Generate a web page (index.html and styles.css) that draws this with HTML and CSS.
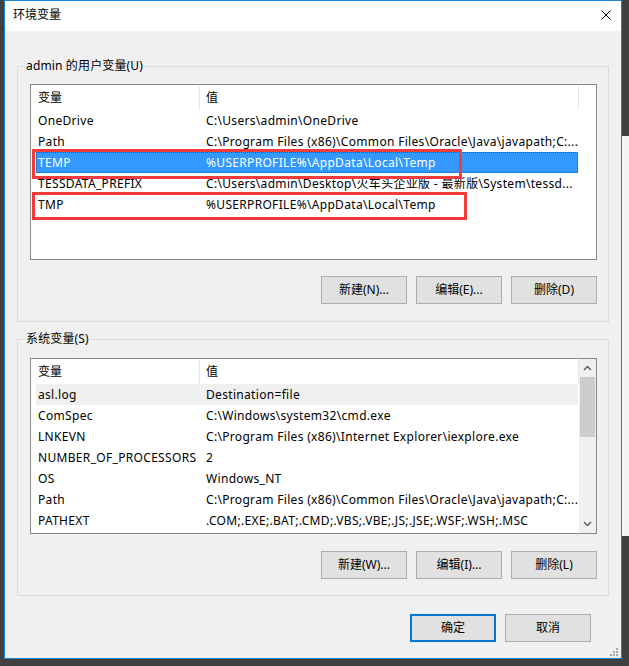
FILE: index.html
```html
<!DOCTYPE html>
<html lang="zh-CN">
<head>
<meta charset="utf-8">
<title>环境变量</title>
<link rel="stylesheet" href="styles.css">
</head>
<body>
<div class="backwin"></div>
<div class="window">
  <div class="titlebar">
    <span class="title">环境变量</span>
    <svg class="close" width="10" height="10" viewBox="0 0 10 10"><path d="M0.5 0.5L9.5 9.5M9.5 0.5L0.5 9.5" stroke="#000" stroke-width="1" fill="none"/></svg>
  </div>
  <div class="content">
    <div class="group group-user">
      <div class="legend">admin 的用户变量(U)</div>
      <div class="list">
        <div class="list-main">
          <div class="header">
            <div class="hcell hname">变量</div>
            <div class="hcell hvalue">值</div>
          </div>
          <div class="row"><span class="cname">OneDrive</span><span class="cvalue">C:\Users\admin\OneDrive</span></div>
          <div class="row"><span class="cname">Path</span><span class="cvalue">C:\Program Files (x86)\Common Files\Oracle\Java\javapath;C:...</span></div>
          <div class="row selected"><span class="cname">TEMP</span><span class="cvalue">%USERPROFILE%\AppData\Local\Temp</span></div>
          <div class="row"><span class="cname">TESSDATA_PREFIX</span><span class="cvalue">C:\Users\admin\Desktop\火车头企业版 - 最新版\System\tessd...</span></div>
          <div class="row"><span class="cname">TMP</span><span class="cvalue">%USERPROFILE%\AppData\Local\Temp</span></div>
        </div>
        <div class="mark mark-temp"></div>
        <div class="mark mark-tmp"></div>
      </div>
      <div class="buttons">
        <button class="btn">新建(N)...</button>
        <button class="btn">编辑(E)...</button>
        <button class="btn">删除(D)</button>
      </div>
    </div>

    <div class="group group-sys">
      <div class="legend">系统变量(S)</div>
      <div class="list">
        <div class="list-main narrow">
          <div class="header">
            <div class="hcell hname">变量</div>
            <div class="hcell hvalue">值</div>
          </div>
          <div class="row hover"><span class="cname">asl.log</span><span class="cvalue">Destination=file</span></div>
          <div class="row"><span class="cname">ComSpec</span><span class="cvalue">C:\Windows\system32\cmd.exe</span></div>
          <div class="row"><span class="cname">LNKEVN</span><span class="cvalue">C:\Program Files (x86)\Internet Explorer\iexplore.exe</span></div>
          <div class="row"><span class="cname">NUMBER_OF_PROCESSORS</span><span class="cvalue">2</span></div>
          <div class="row"><span class="cname">OS</span><span class="cvalue">Windows_NT</span></div>
          <div class="row"><span class="cname">Path</span><span class="cvalue">C:\Program Files (x86)\Common Files\Oracle\Java\javapath;C:...</span></div>
          <div class="row"><span class="cname">PATHEXT</span><span class="cvalue">.COM;.EXE;.BAT;.CMD;.VBS;.VBE;.JS;.JSE;.WSF;.WSH;.MSC</span></div>
        </div>
        <div class="scrollbar">
          <div class="sb-btn"><svg width="9" height="6" viewBox="0 0 9 6"><path d="M1 5L4.5 1.5L8 5" stroke="#606060" stroke-width="1.5" fill="none"/></svg></div>
          <div class="sb-thumb"></div>
          <div class="sb-track"></div>
          <div class="sb-btn"><svg width="9" height="6" viewBox="0 0 9 6"><path d="M1 1L4.5 4.5L8 1" stroke="#606060" stroke-width="1.5" fill="none"/></svg></div>
        </div>
      </div>
      <div class="buttons">
        <button class="btn">新建(W)...</button>
        <button class="btn">编辑(I)...</button>
        <button class="btn">删除(L)</button>
      </div>
    </div>

    <div class="footer">
      <button class="btn btn-default">确定</button>
      <button class="btn">取消</button>
    </div>
  </div>
  <svg class="grip" width="9" height="9" viewBox="0 0 9 9">
    <rect x="7" y="1" width="2" height="2" fill="#a8a8a8"/>
    <rect x="4" y="4" width="2" height="2" fill="#a8a8a8"/>
    <rect x="7" y="4" width="2" height="2" fill="#a8a8a8"/>
    <rect x="1" y="7" width="2" height="2" fill="#a8a8a8"/>
    <rect x="4" y="7" width="2" height="2" fill="#a8a8a8"/>
    <rect x="7" y="7" width="2" height="2" fill="#a8a8a8"/>
  </svg>
</div>
</body>
</html>
```

FILE: styles.css
```css
* { box-sizing: border-box; }
html, body { margin: 0; padding: 0; }
body {
  width: 629px;
  height: 666px;
  overflow: hidden;
  position: relative;
  background: #404040;
  font-family: "Noto Sans", "Noto Sans CJK SC", sans-serif;
  font-size: 12px;
  line-height: 16px;
  color: #000;
}
.backwin {
  position: absolute;
  left: 622px;
  top: 136px;
  width: 7px;
  height: 400px;
  background: #f4f4f4;
}
.window {
  position: relative;
  margin-left: 4px;
  width: 618px;
  height: 659px;
  border: 1px solid #1883d7;
  background: #f0f0f0;
  display: flex;
  flex-direction: column;
}
.titlebar {
  height: 30px;
  flex: none;
  background: #fff;
  display: flex;
  align-items: center;
  justify-content: space-between;
  padding: 0 10px 2px 8px;
}
.title { white-space: nowrap; }
.close { display: block; }
.content {
  padding: 35px 12px 0;
  display: flex;
  flex-direction: column;
}
.group {
  border: 1px solid #dcdcdc;
  display: flex;
  flex-direction: column;
}
.group-user { height: 256px; }
.group-sys { height: 257px; margin-top: 17px; }
.legend {
  align-self: flex-start;
  margin: -9px 0 0 7px;
  padding: 0 1px;
  height: 16px;
  line-height: 16px;
  background: #f0f0f0;
  white-space: nowrap;
  letter-spacing: 0.15px;
}
.list {
  position: relative;
  height: 176px;
  margin: 10px 11px 0 12px;
  border: 1px solid #828790;
  background: #fff;
  display: flex;
  overflow: hidden;
}
.group-sys .list { margin-top: 11px; }
.list-main { flex: 1; min-width: 0; }
.list-main.narrow { flex: none; width: 548px; }
.header {
  display: flex;
  height: 25px;
}
.hcell {
  height: 24px;
  margin-top: 1px;
  border-right: 1px solid #e5e5e5;
  display: flex;
  align-items: center;
  padding-bottom: 1px;
}
.hname { width: 169px; padding-left: 7px; }
.hvalue { width: 379px; padding-left: 6px; }
.row {
  display: flex;
  align-items: center;
  height: 21px;
  width: 542px;
  margin-left: 5px;
  white-space: nowrap;
  letter-spacing: 0.32px;
}
.cname {
  width: 163px;
  flex: none;
  padding-left: 2px;
  overflow: hidden;
}
.cvalue {
  flex: 1;
  min-width: 0;
  padding-left: 7px;
  overflow: hidden;
}
.row.selected {
  background: #3399ff;
  color: #fff;
  outline: 1px dotted #1c5fa8;
  outline-offset: -1px;
}
.row.hover { background: #f0f0f0; }
.mark {
  position: absolute;
  left: 1px;
  border: 3px solid #f23b3b;
}
.mark-temp { top: 64px; width: 430px; height: 30px; }
.mark-tmp { top: 107px; width: 435px; height: 28px; }
.scrollbar {
  width: 17px;
  flex: none;
  background: #f0f0f0;
  display: flex;
  flex-direction: column;
}
.sb-btn {
  height: 18px;
  flex: none;
  display: flex;
  align-items: center;
  justify-content: center;
}
.sb-thumb {
  height: 60px;
  margin: 0 1px;
  background: #cdcdcd;
  flex: none;
}
.sb-track { flex: 1; }
.buttons {
  display: flex;
  justify-content: flex-end;
  gap: 9px;
  margin: 16px 11px 0 0;
}
.group-sys .buttons { margin-top: 17px; }
.btn {
  width: 86px;
  height: 28px;
  background: #e1e1e1;
  border: 1px solid #adadad;
  font-family: "Noto Sans", "Noto Sans CJK SC", sans-serif;
  font-size: 12px;
  line-height: 16px;
  color: #000;
  padding: 0 0 1px;
  margin: 0;
}
.btn-default { border: 2px solid #0078d7; }
.footer {
  display: flex;
  justify-content: flex-end;
  gap: 9px;
  margin-top: 18px;
  padding-right: 18px;
}
.grip {
  position: absolute;
  right: 3px;
  bottom: 2px;
}
```
